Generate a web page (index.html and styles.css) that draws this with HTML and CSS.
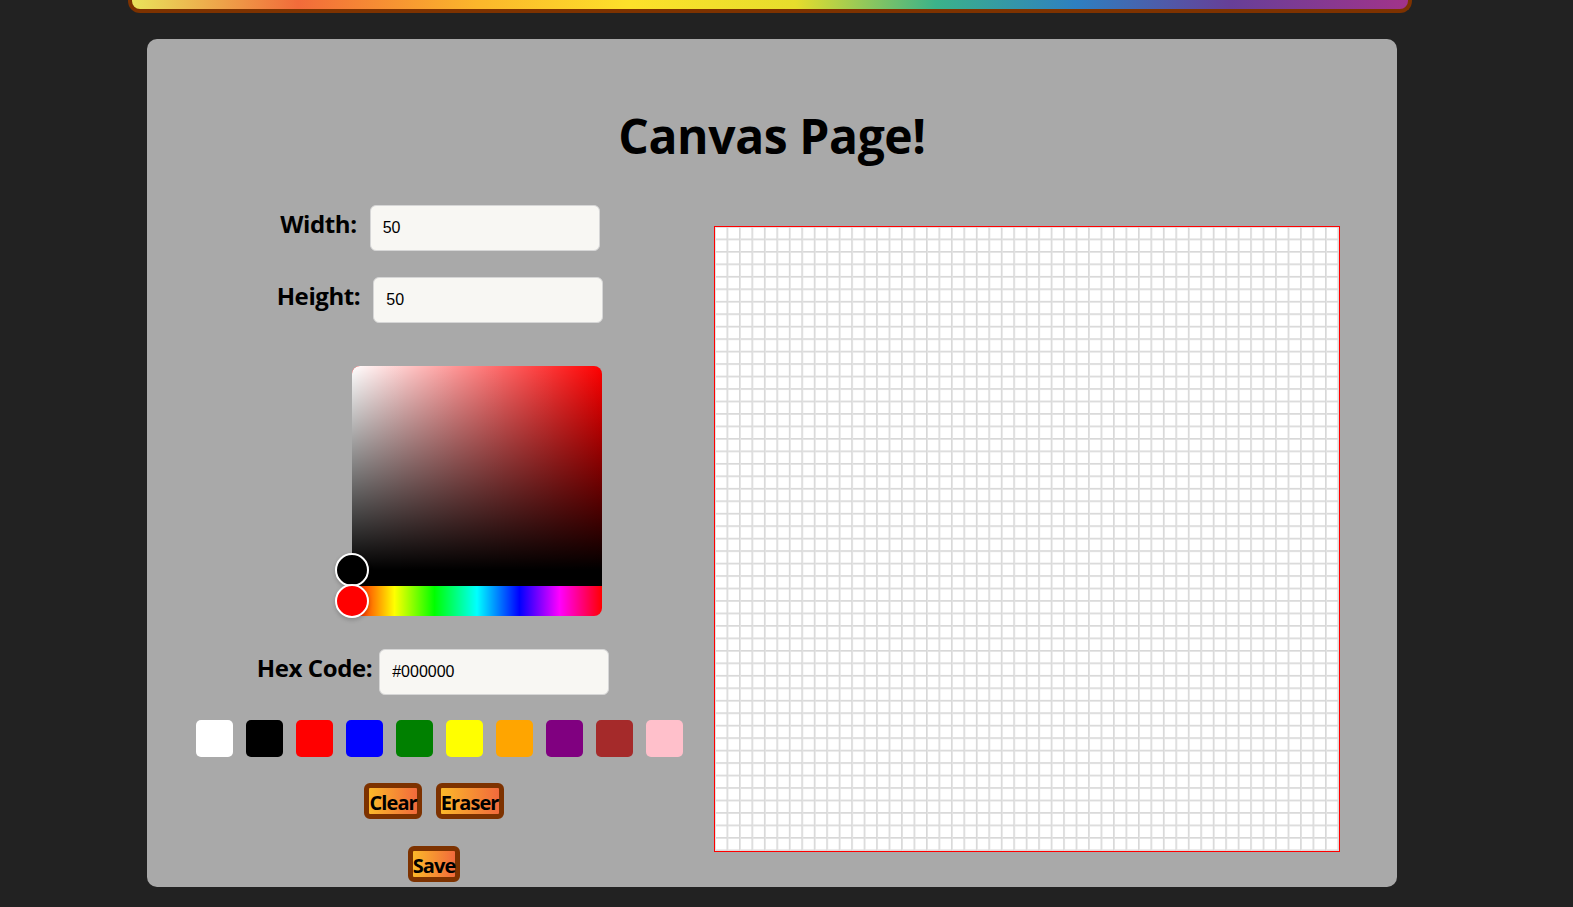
FILE: index.html
```html
<!DOCTYPE html>
<html lang="en">
<head>
<meta charset="utf-8">
<title>Canvas Page!</title>
<link rel="stylesheet" href="styles.css">
</head>
<body>
<header class="rainbow-bar"></header>
<main class="card">
  <h1 class="title">Canvas Page!</h1>
  <div class="workspace">
    <section class="tools">
      <div class="field field-width">
        <label class="field-label" for="w">Width:</label>
        <input class="text-input" id="w" type="text" value="50">
      </div>
      <div class="field field-height">
        <label class="field-label" for="h">Height:</label>
        <input class="text-input" id="h" type="text" value="50">
      </div>
      <div class="picker">
        <div class="saturation"><span class="pointer pointer-sat"></span></div>
        <div class="hue"><span class="pointer pointer-hue"></span></div>
      </div>
      <div class="field field-hex">
        <label class="field-label" for="hex">Hex Code:</label>
        <input class="text-input" id="hex" type="text" value="#000000">
      </div>
      <div class="swatches">
        <button class="swatch sw-white" aria-label="white"></button>
        <button class="swatch sw-black" aria-label="black"></button>
        <button class="swatch sw-red" aria-label="red"></button>
        <button class="swatch sw-blue" aria-label="blue"></button>
        <button class="swatch sw-green" aria-label="green"></button>
        <button class="swatch sw-yellow" aria-label="yellow"></button>
        <button class="swatch sw-orange" aria-label="orange"></button>
        <button class="swatch sw-purple" aria-label="purple"></button>
        <button class="swatch sw-brown" aria-label="brown"></button>
        <button class="swatch sw-pink" aria-label="pink"></button>
      </div>
      <div class="actions actions-top">
        <button class="action-btn">Clear</button>
        <button class="action-btn">Eraser</button>
      </div>
      <div class="actions actions-bottom">
        <button class="action-btn">Save</button>
      </div>
    </section>
    <div class="grid" aria-label="drawing grid"></div>
  </div>
</main>
</body>
</html>
```
FILE: styles.css
```css
* { box-sizing: border-box; }

body {
  margin: 0;
  background: #222222;
  font-family: "Open Sans", "Noto Sans", sans-serif;
  color: #000;
}

.rainbow-bar {
  margin-left: 128px;
  width: 1284px;
  height: 13px;
  border: 4px solid #7d3200;
  border-top: none;
  border-radius: 0 0 12px 12px;
  background: linear-gradient(to right,
    #e9e35b 0%, #f26b3a 13%, #fbb62b 27%, #fde12a 39%,
    #e6dd2c 52%, #3bb28a 63%, #2e7fc0 74%, #663f98 86%, #a2338a 100%);
}

.card {
  margin: 26px 0 0 147px;
  width: 1250px;
  background: #a9a9a9;
  border-radius: 10px;
  padding: 68px 0 5px;
}

.title {
  margin: 0 0 40px;
  text-align: center;
  font-size: 48px;
  line-height: 1.2;
  font-weight: 700;
  letter-spacing: -0.4px;
}

.workspace {
  display: flex;
  align-items: flex-start;
  padding-left: 43px;
}

.tools {
  width: 500px;
  display: flex;
  flex-direction: column;
  align-items: center;
}

.field {
  display: flex;
  align-items: baseline;
  gap: 13px;
}

.field-height { margin-top: 26px; }
.field-hex { margin-top: 33px; gap: 7px; margin-right: 14px; }

.field-label {
  font-size: 24px;
  font-weight: 700;
  letter-spacing: -0.4px;
}

.text-input {
  width: 230px;
  height: 46px;
  padding: 0 12px;
  border: 1px solid #d6d6d6;
  border-radius: 6px;
  background: #f8f7f3;
  font-family: "Liberation Sans", Arial, sans-serif;
  font-size: 16px;
  color: #000;
}

.picker {
  align-self: flex-start;
  margin: 43px 0 0 162px;
  width: 250px;
  height: 250px;
  display: flex;
  flex-direction: column;
}

.saturation {
  position: relative;
  flex: 1;
  border-bottom: 16px solid #000;
  border-radius: 8px 8px 0 0;
  background-color: #ff0000;
  background-image:
    linear-gradient(to top, #000, rgba(0, 0, 0, 0)),
    linear-gradient(to right, #fff, rgba(255, 255, 255, 0));
}

.hue {
  position: relative;
  height: 30px;
  border-radius: 0 0 8px 8px;
  background: linear-gradient(to right,
    #f00 0%, #ff0 17%, #0f0 33%, #0ff 50%, #00f 67%, #f0f 83%, #f00 100%);
}

.pointer {
  position: absolute;
  left: 0;
  width: 34px;
  height: 34px;
  border: 2px solid #fff;
  border-radius: 50%;
  transform: translate(-50%, -50%);
  box-shadow: 0 2px 4px rgba(0, 0, 0, 0.2);
  z-index: 1;
}

.pointer-sat { top: 100%; background: #000; }
.pointer-hue { top: 50%; background: #f00; }

.swatches {
  margin-top: 25px;
  margin-right: 2px;
  display: flex;
  gap: 13px;
}

.swatch {
  width: 37px;
  height: 37px;
  border: none;
  border-radius: 5px;
  padding: 0;
}

.sw-white { background: #ffffff; }
.sw-black { background: #000000; }
.sw-red { background: #ff0000; }
.sw-blue { background: #0000ff; }
.sw-green { background: #008000; }
.sw-yellow { background: #ffff00; }
.sw-orange { background: #ffa500; }
.sw-purple { background: #800080; }
.sw-brown { background: #a52a2a; }
.sw-pink { background: #ffc0cb; }

.actions {
  margin-top: 27px;
  display: flex;
  gap: 14px;
  margin-right: 12px;
}

.actions-top { margin-top: 26px; }

.action-btn {
  height: 36px;
  padding: 3px 0 0;
  border: 5px solid #7d3200;
  border-radius: 6px;
  background: linear-gradient(to right, #fbb829, #f26a3c);
  font-family: "Open Sans", "Noto Sans", sans-serif;
  font-size: 20px;
  font-weight: 700;
  line-height: 23px;
  letter-spacing: -0.9px;
  color: #000;
}

.grid {
  margin: 21px 0 0 24px;
  width: 626px;
  height: 626px;
  border: 1px solid #ff0000;
  background-color: #fff;
  background-image:
    linear-gradient(to right, #e2e2e2 1px, transparent 1px, transparent calc(100% - 1px), #d8d8d8 calc(100% - 1px)),
    linear-gradient(to bottom, #e2e2e2 1px, transparent 1px, transparent calc(100% - 1px), #d8d8d8 calc(100% - 1px));
  background-size: 12.48px 12.48px;
}
```
